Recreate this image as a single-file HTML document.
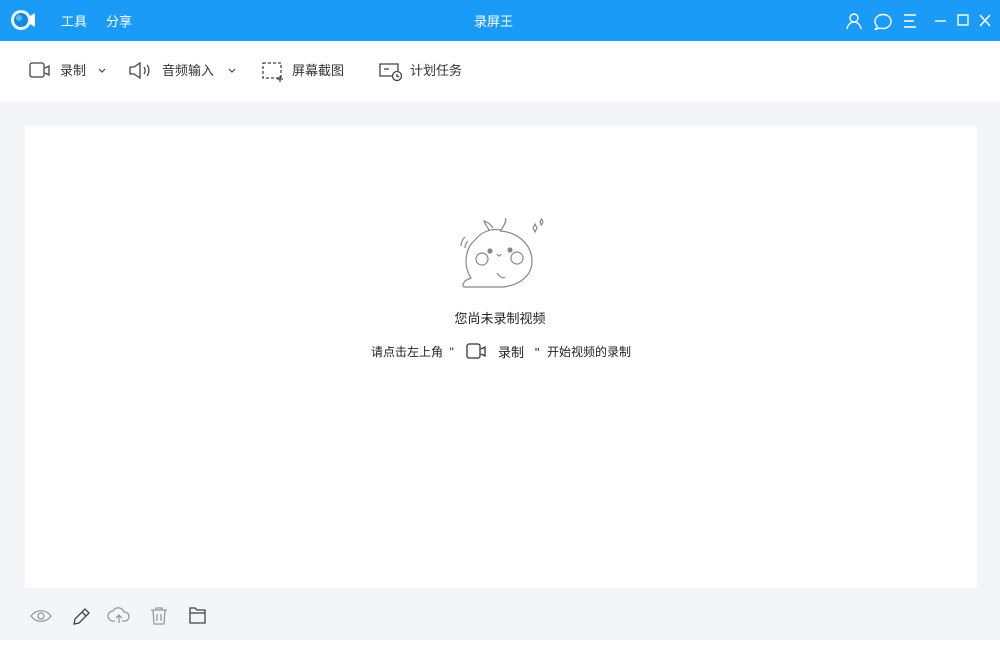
<!DOCTYPE html>
<html><head><meta charset="utf-8"><style>
*{margin:0;padding:0;box-sizing:border-box}
body{width:1000px;height:666px;background:#fff;font-family:"Liberation Sans","Noto Sans CJK SC",sans-serif;position:relative;overflow:hidden;color:#333}
.top{position:absolute;left:0;top:0;width:1000px;height:41px;background:#1a9bf7;color:#fff}
.top span{position:absolute;top:11px;font-size:13px}
.tb{position:absolute;top:41px;left:0;width:1000px;height:61px;background:#fff}
.tb span{position:absolute;top:19px;font-size:13px;color:#333}
.gray{position:absolute;top:102px;left:0;width:1000px;height:538px;background:#f4f5f9}
.panel{position:absolute;left:25px;top:126px;width:952px;height:462px;background:#fff}
svg{position:absolute}
</style></head><body>
<div class="top">
<svg style="left:10px;top:9px" width="26" height="22" viewBox="0 0 26 22"><circle cx="11" cy="11" r="10" fill="#e8f4fd"/><circle cx="11" cy="11" r="7" fill="#1588dc"/><circle cx="9" cy="9" r="3" fill="#5cb8f5"/><path d="M20 7l5-3v14l-5-3z" fill="#fff"/></svg>
<span style="left:61px">工具</span><span style="left:106px">分享</span>
<span style="left:474px">录屏王</span>
<svg style="left:845px;top:12px" width="150" height="18" viewBox="0 0 150 18" fill="none" stroke="#fff" stroke-width="1.4">
<circle cx="9" cy="6" r="4"/><path d="M2 17c1-5 4-7 7-7s6 2 7 7"/>
<path d="M32 15l-2 3 4-2c1 .3 3 .5 4 .5 4.5 0 8-3 8-7s-3.5-7-8-7-8 3-8 7c0 2 .8 3.5 2 4.5z"/>
<path d="M59 3h12M59 9h10M59 15h12"/>
<path d="M90 9h11"/><rect x="113" y="3" width="10" height="10"/><path d="M135 3l10 11M145 3l-10 11" stroke-width="1.5"/>
</svg>
</div>
<div class="tb">
<svg style="left:29px;top:21px" width="22" height="17" viewBox="0 0 22 17" fill="none" stroke="#444" stroke-width="1.3"><rect x="1" y="1" width="14" height="14" rx="2"/><path d="M16 6l4-2v9l-4-2"/></svg>
<span style="left:60px">录制</span>
<svg style="left:97px;top:26px" width="10" height="7" viewBox="0 0 10 7" fill="none" stroke="#444" stroke-width="1.2"><path d="M2 2l3 3 3-3"/></svg>
<svg style="left:129px;top:21px" width="26" height="17" viewBox="0 0 26 17" fill="none" stroke="#444" stroke-width="1.3"><path d="M1 5h4l6-4v15l-6-4H1z"/><path d="M15 5c1.5 2 1.5 5 0 7M18 3c2.5 3 2.5 8 0 11"/></svg>
<span style="left:162px">音频输入</span>
<svg style="left:227px;top:26px" width="10" height="7" viewBox="0 0 10 7" fill="none" stroke="#444" stroke-width="1.2"><path d="M2 2l3 3 3-3"/></svg>
<svg style="left:262px;top:21px" width="22" height="20" viewBox="0 0 22 20" fill="none" stroke="#444" stroke-width="1.3" stroke-dasharray="3 2"><rect x="1" y="1" width="18" height="15"/><path d="M18 14v6M15 17h6" stroke-dasharray="none"/></svg>
<span style="left:292px">屏幕截图</span>
<svg style="left:378px;top:21px" width="26" height="20" viewBox="0 0 26 20" fill="none" stroke="#444" stroke-width="1.3"><path d="M14 14H2V2h18v7"/><path d="M6 7h5"/><circle cx="19" cy="14" r="4.5" fill="#fff"/><path d="M19 12v2.5h2"/></svg>
<span style="left:410px">计划任务</span>
</div>
<div class="gray"></div>
<div class="panel"></div>
<svg style="left:455px;top:218px" width="92" height="72" viewBox="0 0 92 72" fill="none" stroke="#888" stroke-width="1.2">
<path d="M20 22c6-8 16-12 26-10 4-6 6-10 4-12M34 12c-2-4-4-6-5-9 4 1 7 4 9 7"/>
<path d="M20 22c-10 8-12 26-4 38-6 2-10 6-7 9h40c14-2 28-10 28-26 0-16-14-29-32-30"/>
<circle cx="27" cy="41" r="6"/><circle cx="62" cy="40" r="6"/>
<circle cx="35" cy="33" r="2" fill="#888"/><circle cx="55" cy="32" r="2" fill="#888"/>
<path d="M42 36q2 4 4 0"/><path d="M42 55c3 4 6 6 8 4"/>
<path d="M6 28c0-4 2-7 4-9M10 30c0-3 1-5 3-7"/>
<path d="M78 10l2-4 2 4-2 4zM85 4l1.5-3 1.5 3-1.5 3z"/>
</svg>
<div style="position:absolute;left:0;width:1000px;top:308px;text-align:center;font-size:13px;color:#222">您尚未录制视频</div>
<div style="position:absolute;left:371px;top:343px;font-size:12px;color:#222;white-space:nowrap">请点击左上角 &nbsp;"</div>
<svg style="left:466px;top:343px" width="22" height="17" viewBox="0 0 22 17" fill="none" stroke="#333" stroke-width="1.3"><rect x="1" y="1" width="13" height="14" rx="2"/><path d="M15 6l4-2v9l-4-2"/></svg>
<div style="position:absolute;left:498px;top:342px;font-size:13px;color:#222;white-space:nowrap">录制 &nbsp;&nbsp;"</div>
<div style="position:absolute;left:547px;top:343px;font-size:12px;color:#222;white-space:nowrap">开始视频的录制</div>
<svg style="left:30px;top:605px" width="190" height="22" viewBox="0 0 190 22" fill="none" stroke-width="1.3">
<path d="M1 11c5-7 15-7 20 0-5 7-15 7-20 0z" stroke="#999"/><circle cx="11" cy="11" r="3" stroke="#999"/>
<path d="M44 19l1-5 10-10 4 4-10 10zM52 7l4 4" stroke="#444"/>
<path d="M85 16h-2a5 5 0 010-10 6 6 0 0111 1 4 4 0 011 9h-3M89 18v-8M86 13l3-3 3 3" stroke="#999"/>
<path d="M121 5h16M126 5V3h6v2M123 5l1 14h10l1-14M127 9v7M131 9v7" stroke="#999"/>
<path d="M160 6V3h5l2 2h8v13h-15z" stroke="#444"/><path d="M160 8h15" stroke="#444"/>
</svg>
</body></html>
